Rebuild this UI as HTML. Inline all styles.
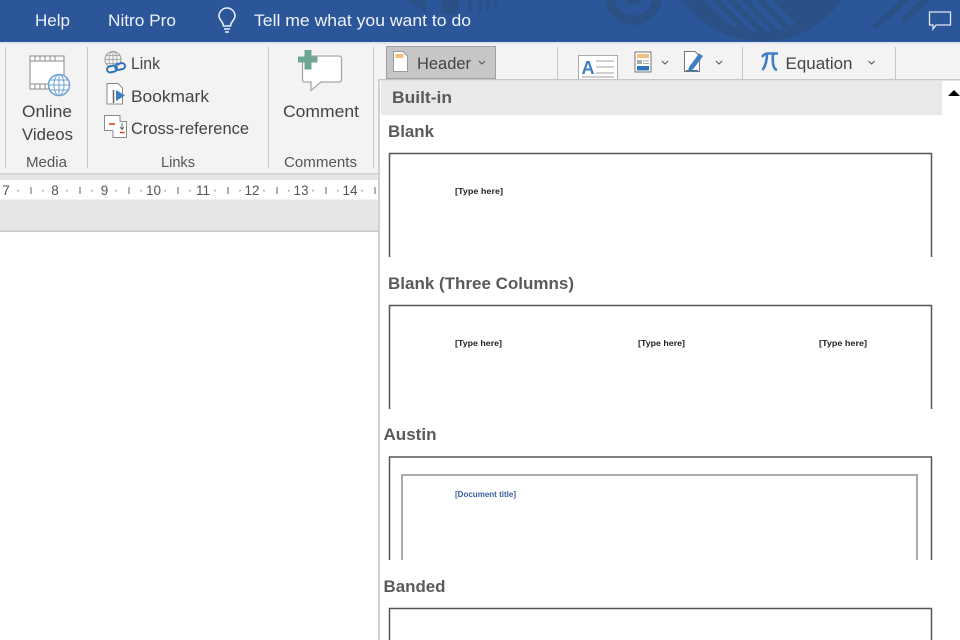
<!DOCTYPE html>
<html lang="en">
<head>
<meta charset="utf-8">
<title>Header gallery</title>
<style>
html,body{margin:0;padding:0;background:#fff;width:960px;height:640px;overflow:hidden}
svg{display:block;font-family:"Liberation Sans",sans-serif}
.w{fill:#eef2f8;font-size:16.5px}
.r{fill:#444;font-size:17px}
.g{fill:#555;font-size:14.5px}
.h{fill:#5a5a5a;font-size:17px;font-weight:bold}
.t{fill:#222;font-size:8.5px;font-weight:bold}
</style>
</head>
<body>
<svg width="960" height="640" viewBox="0 0 960 640" xmlns="http://www.w3.org/2000/svg">
<defs>
  <clipPath id="c1"><circle cx="762" cy="-45" r="77"/></clipPath>
  <clipPath id="c0"><rect width="960" height="42"/></clipPath>
</defs>
<!-- title bar -->
<rect width="960" height="42" fill="#2b579a"/>
<g clip-path="url(#c0)">
  <circle cx="762" cy="-57.500" r="98.500" fill="#2a5085"/>
  <g clip-path="url(#c1)"><path d="M708 0L748 40M723 0L763 40M738 0L778 40M752 0L792 40M768 0L808 40" stroke="#2b579a" stroke-width="5"/></g>
  <circle cx="633.500" cy="-3.500" r="23.700" fill="none" stroke="#2a5085" stroke-width="9.500"/>
  <circle cx="633.500" cy="-3.500" r="9" fill="#2a5085"/>
  <path d="M408 0L426 12V0Z" fill="#2a5085"/>
  <path d="M441 0H459V12Q450 17 441 12Z" fill="#2a5085"/>
  <path d="M470 0V13M480 0V13M488 0V10M496 0V7" stroke="#2a5085" stroke-width="3"/>
  <path d="M872 25L901 0H910L877 29Z" fill="#2a5085"/>
  <path d="M900 19L921 0H930L905 24Z" fill="#2a5085"/>
</g>
<rect x="0" y="42" width="960" height="2" fill="#dfe5ee"/>
<text class="w" x="35" y="26" textLength="35" lengthAdjust="spacingAndGlyphs">Help</text>
<text class="w" x="108" y="26" textLength="68" lengthAdjust="spacingAndGlyphs">Nitro Pro</text>
<text class="w" x="254" y="26" textLength="217" lengthAdjust="spacingAndGlyphs">Tell me what you want to do</text>
<path d="M223.500 26C223.500 22 219 20 219 16A8 8 0 0 1 235 16C235 20 230.500 22 230.500 26ZM224 29H230M225 32H229" fill="none" stroke="#eef2f8" stroke-width="1.500"/>
<path d="M929.500 12H950.500V25H936L933 29V25H929.500Z" fill="none" stroke="#dfe7f3" stroke-width="1.300"/>

<!-- ribbon -->
<rect y="44" width="960" height="130" fill="#f3f3f3"/>
<rect y="173" width="380" height="7" fill="#e6e6e6"/>
<rect y="173" width="380" height="1.500" fill="#d2d2d2"/>
<g fill="#c6c6c6">
  <rect x="5" y="47" width="1" height="121"/>
  <rect x="87" y="47" width="1" height="121"/>
  <rect x="268" y="47" width="1" height="121"/>
  <rect x="373" y="47" width="1" height="121"/>
  <rect x="557" y="47" width="1" height="32"/>
  <rect x="742" y="47" width="1" height="32"/>
  <rect x="895" y="47" width="1" height="32"/>
</g>

<!-- Media -->
<rect x="30" y="56" width="34" height="33" fill="#fff" stroke="#8a8a8a"/>
<path d="M30 61H64M30 84H64" stroke="#8a8a8a"/>
<path d="M35 56V61M40 56V61M45 56V61M50 56V61M55 56V61M35 84V89M40 84V89M45 84V89" stroke="#8a8a8a"/>
<circle cx="59" cy="85" r="10.500" fill="#fff" stroke="#6ea1d4" stroke-width="1.500"/>
<ellipse cx="59" cy="85" rx="5" ry="10.500" fill="none" stroke="#6ea1d4"/>
<path d="M49 85H70M50.500 80H67.500M50.500 90H67.500M59 75V95" stroke="#6ea1d4"/>
<text class="r" x="22" y="117" textLength="50" lengthAdjust="spacingAndGlyphs">Online</text>
<text class="r" x="22" y="140" textLength="51" lengthAdjust="spacingAndGlyphs">Videos</text>
<text class="g" x="26" y="167" textLength="41" lengthAdjust="spacingAndGlyphs">Media</text>

<!-- Links -->
<circle cx="113" cy="59.500" r="8" fill="#f3f3f3" stroke="#9a9a9a"/>
<path d="M105 59.500H121M113 51.500V67.500M106 55.500H120M106 63.500H120" stroke="#9a9a9a" stroke-width=".8"/>
<ellipse cx="113" cy="59.500" rx="4" ry="8" fill="none" stroke="#9a9a9a" stroke-width=".8"/>
<rect x="107" y="66" width="10" height="6" rx="3" fill="#f3f3f3" stroke="#2e75b6" stroke-width="2" transform="rotate(-12 112 69)"/>
<rect x="115" y="63.500" width="10" height="6" rx="3" fill="none" stroke="#2e75b6" stroke-width="2" transform="rotate(-12 120 66.500)"/>
<text class="r" x="131" y="69" textLength="29" lengthAdjust="spacingAndGlyphs">Link</text>
<path d="M107 83.500H118L122.500 88V104H107Z" fill="#fff" stroke="#8a8a8a"/>
<path d="M113.500 90V103" stroke="#666" stroke-width="1.500"/>
<path d="M116 90L125 95.500L116 101Z" fill="#3f7fc1"/>
<text class="r" x="131" y="102" textLength="78" lengthAdjust="spacingAndGlyphs">Bookmark</text>
<rect x="104.500" y="115.500" width="15.500" height="15" fill="#fff" stroke="#8a8a8a"/>
<path d="M113 130.500V137.500H126.500V121.500H120" fill="#fff" stroke="#8a8a8a"/>
<path d="M109 124H115" stroke="#d83b1c" stroke-width="1.500"/>
<path d="M120 132.500H124.500" stroke="#d83b1c" stroke-width="1.500"/>
<path d="M122 123V129M120 127L122 129.500L124 127" stroke="#666" fill="none"/>
<text class="r" x="131" y="134" textLength="118" lengthAdjust="spacingAndGlyphs">Cross-reference</text>
<text class="g" x="161" y="167" textLength="34" lengthAdjust="spacingAndGlyphs">Links</text>

<!-- Comments -->
<path d="M305 56H339Q341.500 56 341.500 58.500V79.500Q341.500 82 339 82H321L311 90.500V82H305Q302.500 82 302.500 79.500V60" fill="#fff" stroke="#a8a8a8" stroke-width="1.300"/>
<path d="M304.500 50H311.500V56.500H317.500V62.500H311.500V69.500H304.500V62.500H298V56.500H304.500Z" fill="#6fa796"/>
<text class="r" x="283" y="117" textLength="76" lengthAdjust="spacingAndGlyphs">Comment</text>
<text class="g" x="284" y="167" textLength="73" lengthAdjust="spacingAndGlyphs">Comments</text>

<!-- Header button -->
<rect x="386.500" y="46.500" width="109" height="32" fill="#c6c6c6" stroke="#a0a0a0"/>
<path d="M393.500 51.500H403L407.500 56V71.500H393.500Z" fill="#fff" stroke="#999"/>
<rect x="395.500" y="54" width="8" height="4" fill="#eec07a"/>
<text class="r" x="417" y="69" textLength="54" lengthAdjust="spacingAndGlyphs">Header</text>
<path d="M479 61L482 64L485 61" fill="none" stroke="#555" stroke-width="1"/>

<!-- text box -->
<rect x="578.500" y="55.500" width="39" height="25" fill="#fff" stroke="#aaa"/>
<text x="581.500" y="74" font-size="18" font-weight="bold" fill="#3f7fc1">A</text>
<path d="M596 61H614M596 67H614M596 73H614M582 77H614" stroke="#b5b5b5" stroke-width="1.200"/>
<!-- quick parts -->
<rect x="635" y="52" width="16" height="20" fill="#fff" stroke="#777"/>
<rect x="637" y="54" width="12" height="4" fill="#eec07a"/>
<rect x="637" y="60" width="5" height="4" fill="#aaa"/>
<path d="M643 61H649M643 63.500H649" stroke="#aaa"/>
<rect x="637" y="66" width="12" height="4.500" fill="#2e75b6"/>
<path d="M662 61L665 64L668 61" fill="none" stroke="#555"/>
<!-- signature -->
<path d="M684.500 51.500H695L699.500 56V71.500H684.500Z" fill="#fff" stroke="#777"/>
<path d="M689 67L699 53.500L703 56L693 69.500L688 71Z" fill="#3f7fc1"/>
<path d="M686 70.500H698" stroke="#2e75b6"/>
<path d="M716 61L719 64L722 61" fill="none" stroke="#555"/>
<!-- equation -->
<path d="M762 57Q764 53.500 768 53.500H778M767 53.500C767 60 765.500 66 762.500 70M773 53.500C772.500 60 772.500 69 777 70" fill="none" stroke="#3f7fc1" stroke-width="2.600"/>
<text class="r" x="785.500" y="69" textLength="67" lengthAdjust="spacingAndGlyphs">Equation</text>
<path d="M868.500 61L871.500 64L874.500 61" fill="none" stroke="#555"/>

<!-- ruler -->
<rect y="180" width="379" height="19.500" fill="#fff"/>
<g font-size="13.500" fill="#555" text-anchor="middle">
  <text x="6" y="195">7</text>
  <text x="55" y="195">8</text>
  <text x="104.500" y="195">9</text>
  <text x="153.500" y="195">10</text>
  <text x="203" y="195">11</text>
  <text x="252" y="195">12</text>
  <text x="301" y="195">13</text>
  <text x="350" y="195">14</text>
</g>
<g stroke="#666">
  <path d="M31 187V194M80 187V194M129 187V194M178 187V194M228 187V194M277 187V194M326 187V194M375 187V194"/>
  <path d="M18 190V191.500M43 190V191.500M67 190V191.500M92 190V191.500M116 190V191.500M141 190V191.500M165 190V191.500M190 190V191.500M215 190V191.500M240 190V191.500M264 190V191.500M289 190V191.500M313 190V191.500M338 190V191.500M362 190V191.500"/>
</g>
<rect y="199.500" width="380" height="31" fill="#e6e6e6"/>
<rect y="230.500" width="380" height="1.500" fill="#c8c8c8"/>

<!-- dropdown -->
<rect x="378" y="79" width="582" height="561" fill="#fff"/>
<rect x="378" y="79" width="582" height="1.500" fill="#c6c6c6"/>
<rect x="378" y="79" width="2" height="561" fill="#d0d0d0"/>
<rect x="381" y="81" width="561" height="34" fill="#e9e9e9"/>
<text class="h" x="392" y="103" font-size="16" textLength="60" lengthAdjust="spacingAndGlyphs">Built-in</text>
<path d="M948 96L954 90L960 96Z" fill="#000"/>

<text class="h" x="388" y="137" textLength="46" lengthAdjust="spacingAndGlyphs">Blank</text>
<path d="M389.500 257V153.500H931.500V257" fill="none" stroke="#555" stroke-width="1.500"/>
<text class="t" x="455" y="194" textLength="48" lengthAdjust="spacingAndGlyphs">[Type here]</text>

<text class="h" x="388" y="289" textLength="186" lengthAdjust="spacingAndGlyphs">Blank (Three Columns)</text>
<path d="M389.500 409V305.500H931.500V409" fill="none" stroke="#555" stroke-width="1.500"/>
<text class="t" x="455" y="346" textLength="47" lengthAdjust="spacingAndGlyphs">[Type here]</text>
<text class="t" x="638" y="346" textLength="47" lengthAdjust="spacingAndGlyphs">[Type here]</text>
<text class="t" x="819" y="346" textLength="48" lengthAdjust="spacingAndGlyphs">[Type here]</text>

<text class="h" x="383.500" y="440" textLength="53" lengthAdjust="spacingAndGlyphs">Austin</text>
<path d="M389.500 560V457H931.500V560" fill="none" stroke="#555" stroke-width="1.500"/>
<path d="M402 560V475H917V560" fill="none" stroke="#8f8f8f" stroke-width="1.500"/>
<text x="455" y="497" font-size="8.500" font-weight="bold" fill="#3a5f9e" textLength="61" lengthAdjust="spacingAndGlyphs">[Document title]</text>

<text class="h" x="383.500" y="592" textLength="62" lengthAdjust="spacingAndGlyphs">Banded</text>
<path d="M389.500 640V608.500H931.500V640" fill="none" stroke="#555" stroke-width="1.500"/>
</svg>
</body>
</html>
